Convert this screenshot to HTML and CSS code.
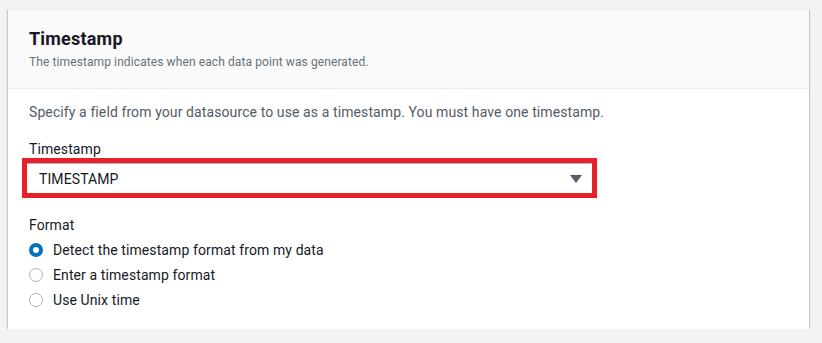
FILE: index.html
```html
<!DOCTYPE html>
<html>
<head>
<meta charset="utf-8">
<link rel="stylesheet" href="styles.css">
</head>
<body>
<div class="card">
  <div class="card-header">
    <h2 class="title">Timestamp</h2>
    <p class="subtitle">The timestamp indicates when each data point was generated.</p>
  </div>
  <div class="card-body">
    <p class="intro">Specify a field from your datasource to use as a timestamp. You must have one timestamp.</p>
    <div class="field">
      <div class="label">Timestamp</div>
      <div class="highlight">
        <div class="select">
          <span class="select-value">TIMESTAMP</span>
          <svg class="caret" width="12" height="8" viewBox="0 0 12 8"><path d="M0 0 H12 L6 8 Z" fill="#545b64"/></svg>
        </div>
      </div>
    </div>
    <div class="field format">
      <div class="label">Format</div>
      <div class="radios">
        <label class="radio"><span class="dot checked"></span><span>Detect the timestamp format from my data</span></label>
        <label class="radio"><span class="dot"></span><span>Enter a timestamp format</span></label>
        <label class="radio"><span class="dot"></span><span>Use Unix time</span></label>
      </div>
    </div>
  </div>
</div>
</body>
</html>
```
FILE: styles.css
```css
* { box-sizing: border-box; }
body {
  margin: 0;
  background: #f2f3f3;
  font-family: Roboto, "Noto Sans", sans-serif;
  color: #16191f;
  letter-spacing: 0.1px;
}
.card {
  margin: 9px 0 0 8px;
  width: 801px;
  background: #fff;
  border-top: 1px solid #eaeded;
  box-shadow: 0 1px 1px 0 rgba(0,28,36,.3), 1px 1px 1px 0 rgba(0,28,36,.15), -1px 1px 1px 0 rgba(0,28,36,.15);
}
.card-header {
  background: #fafafa;
  border-bottom: 1px solid #eaeded;
  padding: 18px 21px 18px;
}
.title {
  margin: 0;
  font-size: 18px;
  line-height: 22px;
  font-weight: 700;
  color: #16191f;
  letter-spacing: 0.2px;
}
.subtitle {
  margin: 4px 0 0;
  font-size: 12px;
  line-height: 16px;
  color: #687078;
}
.card-body {
  padding: 13px 21px 17px;
}
.intro {
  margin: 0;
  font-size: 14px;
  line-height: 20px;
  color: #545b64;
}
.field { margin-top: 17px; }
.label {
  font-size: 14px;
  line-height: 20px;
  color: #16191f;
}
.highlight {
  margin-top: -1px;
  margin-left: -7px;
  width: 575px;
  border: 5px solid #e8202a;
}
.select {
  height: 30px;
  border-top: 1px solid #aab7b8;
  background: #fff;
  display: flex;
  align-items: center;
  justify-content: space-between;
  padding: 0 10px 0 12px;
}
.select-value {
  font-size: 14px;
  color: #16191f;
}
.format { margin-top: 17px; }
.radios { display: flex; flex-direction: column; margin-top: 2px; }
.radio {
  display: flex;
  align-items: center;
  height: 25px;
  font-size: 14px;
  color: #16191f;
}
.dot {
  width: 14px;
  height: 14px;
  border-radius: 50%;
  border: 1px solid #aab7b8;
  margin-right: 10px;
  flex: none;
}
.dot.checked {
  border: 4px solid #0073bb;
  background: #fff;
}
```
